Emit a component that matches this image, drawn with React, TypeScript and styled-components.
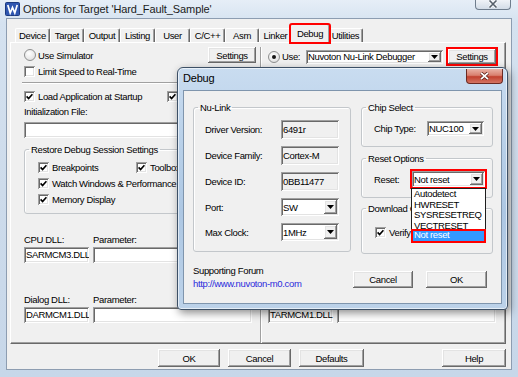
import React from 'react'
import styled, { createGlobalStyle, css } from 'styled-components'

//GLOBAL
const GlobalStyle = createGlobalStyle`
  html, body {
    margin: 0;
    padding: 0;
  }
  body {
    font-family: "Liberation Sans", Arial, sans-serif;
    font-size: 9.5px;
    letter-spacing: -0.35px;
    color: #000;
  }
  *, *::before, *::after {
    box-sizing: border-box;
  }
`

//SHARED LOOKS
const sunken = css`
  box-shadow: inset 1px 1px #a0a0a0, inset -1px -1px #ffffff, inset 2px 2px #696969, inset -2px -2px #e3e3e3;
`
const raised = css`
  box-shadow: inset -1px -1px #696969, inset 1px 1px #ffffff, inset -2px -2px #a0a0a0, inset 2px 2px #e3e3e3;
`
const redMark = css`
  outline: 2px solid #ff0000;
`

//DATA
const TABS = [
  { label: 'Device', w: 35 },
  { label: 'Target', w: 34 },
  { label: 'Output', w: 36 },
  { label: 'Listing', w: 35 },
  { label: 'User', w: 35 },
  { label: 'C/C++', w: 35 },
  { label: 'Asm', w: 34 },
  { label: 'Linker', w: 33 },
  { label: 'Debug', w: 36, active: true },
  { label: 'Utilities', w: 35 },
]

const NULINK_INFO = [
  { label: 'Driver Version:', value: '6491r' },
  { label: 'Device Family:', value: 'Cortex-M' },
  { label: 'Device ID:', value: '0BB11477' },
]

const RESET_CHOICES = ['Autodetect', 'HWRESET', 'SYSRESETREQ', 'VECTRESET', 'Not reset']

//WINDOW FRAME
const Desktop = styled.div`
  position: relative;
  width: 518px;
  height: 377px;
  overflow: hidden;
  background: #c4d5e9;
`
const MainWindow = styled.div`
  width: 100%;
  height: 100%;
  display: flex;
  flex-direction: column;
  background: linear-gradient(180deg, #e6eef7 0%, #d5e2f0 6%, #cddbeb 50%, #c7d7e9 100%);
`
const TitleBar = styled.div`
  position: relative;
  flex: none;
  height: 18px;
  display: flex;
  align-items: center;
  gap: 3px;
  padding-left: 5px;
  font-size: 11px;
  letter-spacing: -0.1px;
  color: #1b1b1b;
`
const WindowClose = styled.div`
  position: absolute;
  right: 7px;
  top: -2px;
  width: 36px;
  height: 12px;
  border: 1px solid #6f7d8d;
  border-top: none;
  border-radius: 0 0 4px 4px;
  background: linear-gradient(180deg, #f6f8fb, #d3dce7);
  display: flex;
  align-items: center;
  justify-content: center;
`
const Client = styled.div`
  flex: 1;
  margin: 0 6px 7px 6px;
  padding: 5px 5px 0 3px;
  background: #f0f0f0;
  border: 1px solid #8d9db1;
  display: flex;
  flex-direction: column;
`

//TABS
const TabStrip = styled.div`
  position: relative;
  z-index: 2;
  height: 19px;
  display: flex;
  align-items: flex-end;
  padding-left: 5px;
`
const Tab = styled.div<{ $w: number; $active?: boolean }>`
  position: relative;
  flex: none;
  width: ${p => p.$w + (p.$active ? 4 : 0)}px;
  height: ${p => (p.$active ? 19 : 14)}px;
  margin: ${p => (p.$active ? '0 -2px' : '0 0 1px 0')};
  padding-bottom: ${p => (p.$active ? 2 : 0)}px;
  display: flex;
  align-items: center;
  justify-content: center;
  background: #f0f0f0;
  border-top: 1px solid #ffffff;
  border-left: 1px solid #ffffff;
  border-right: 1px solid #696969;
  border-radius: 2px 2px 0 0;
  box-shadow: inset -1px 0 #a0a0a0;
  z-index: ${p => (p.$active ? 1 : 0)};
  ${p => p.$active && css`
    ${redMark};
    outline-offset: -1px;
  `}
`
const Panel = styled.div`
  position: relative;
  z-index: 1;
  margin-top: -1px;
  height: 302px;
  padding: 4px 0 0 11px;
  border-top: 1px solid #ffffff;
  border-left: 1px solid #ffffff;
  border-right: 1px solid #696969;
  border-bottom: 1px solid #696969;
  box-shadow: inset -1px -1px #a0a0a0;
  display: grid;
  grid-template-columns: 234px 2px 230px;
  column-gap: 4px;
  align-items: start;
`
const Divider = styled.div`
  align-self: stretch;
  border-left: 1px solid #a0a0a0;
  border-right: 1px solid #ffffff;
`
const Footer = styled.div`
  height: 18px;
  margin-top: 5px;
  padding-left: 148px;
  display: flex;
  align-items: center;
  gap: 8px;
`
const FooterSpacer = styled.div`
  flex: 1;
`

//CONTROLS
const Button = styled.div<{ $w: number; $h?: number; $marked?: boolean }>`
  flex: none;
  width: ${p => p.$w}px;
  height: ${p => p.$h ?? 18}px;
  display: flex;
  align-items: center;
  justify-content: center;
  background: #f0f0f0;
  ${raised};
  ${p => p.$marked && redMark};
`
const CheckLabel = styled.label<{ $span?: boolean }>`
  display: flex;
  align-items: center;
  gap: 3px;
  height: 14px;
  white-space: nowrap;
  ${p => p.$span && 'grid-column: 1 / -1;'}
`
const CheckBox = styled.span`
  flex: none;
  width: 11px;
  height: 11px;
  background: #ffffff;
  ${sunken};
  display: flex;
  align-items: center;
  justify-content: center;
`
const RadioLabel = styled.label<{ $w?: number }>`
  flex: none;
  display: flex;
  align-items: center;
  gap: 2px;
  width: ${p => (p.$w ? `${p.$w}px` : 'auto')};
  padding-left: 2px;
  white-space: nowrap;
`
const RadioDot = styled.span<{ $on?: boolean }>`
  position: relative;
  flex: none;
  width: 12px;
  height: 12px;
  border-radius: 50%;
  border: 1px solid #8e8f8f;
  background: radial-gradient(circle at 40% 35%, #ffffff, #d9d9d9);
  ${p => p.$on && css`
    &::after {
      content: '';
      position: absolute;
      left: 3px;
      top: 3px;
      width: 4px;
      height: 4px;
      border-radius: 50%;
      background: #161616;
    }
  `}
`
const TextField = styled.div<{ $readOnly?: boolean; $h?: number }>`
  flex: 1;
  min-width: 0;
  height: ${p => (p.$h ? `${p.$h}px` : '100%')};
  padding: 0 2px;
  display: flex;
  align-items: center;
  white-space: nowrap;
  overflow: hidden;
  background: ${p => (p.$readOnly ? '#f0f0f0' : '#ffffff')};
  ${sunken};
`
const SelectBox = styled.div<{ $w: number; $h: number; $marked?: boolean }>`
  position: relative;
  flex: none;
  width: ${p => p.$w}px;
  height: ${p => p.$h}px;
  padding: 2px;
  display: flex;
  align-items: center;
  background: #ffffff;
  ${sunken};
  ${p => p.$marked && redMark};
`
const SelectText = styled.span`
  flex: 1;
  overflow: hidden;
  white-space: nowrap;
`
const ArrowButton = styled.span`
  flex: none;
  width: 13px;
  align-self: stretch;
  display: flex;
  align-items: center;
  justify-content: center;
  background: #f0f0f0;
  ${raised};
`
const DropList = styled.div`
  position: absolute;
  z-index: 5;
  left: -1px;
  top: calc(100% + 1px);
  width: 75px;
  background: #ffffff;
  border: 1px solid #1e1e1e;
`
const DropItem = styled.div<{ $selected?: boolean }>`
  height: 10.5px;
  line-height: 10.5px;
  padding-left: 2px;
  white-space: nowrap;
  ${p => p.$selected && css`
    margin-top: -1px;
    height: 11.5px;
    background: #3399ff;
    color: #ffffff;
    ${redMark};
    outline-offset: -1px;
  `}
`

//GROUP BOX
const Group = styled.fieldset<{ $mt?: number; $mx?: number }>`
  min-width: 0;
  margin: ${p => p.$mt ?? 0}px ${p => p.$mx ?? 0}px 0;
  padding: 0;
  border: 1px solid #c3c7cb;
  border-radius: 3px;
  box-shadow: inset 1px 1px #ffffff;
`
const GroupTitle = styled.legend`
  margin-left: 4px;
  padding: 0 2px;
  line-height: 11px;
  font-size: inherit;
`

//TARGET PAGE
const Column = styled.div`
  display: flex;
  flex-direction: column;
`
const HeadRow = styled.div<{ $drop?: number }>`
  height: 16px;
  padding-top: ${p => p.$drop ?? 0}px;
  display: flex;
  align-items: center;
  justify-content: space-between;
  gap: 4px;
`
const OptionRow = styled.div<{ $mt: number; $split?: number }>`
  height: 14px;
  margin-top: ${p => p.$mt}px;
  padding-left: 2px;
  display: grid;
  grid-template-columns: ${p => (p.$split ? `${p.$split}px auto` : 'auto')};
  align-items: center;
`
const Separator = styled.div`
  height: 2px;
  margin-top: 4px;
  border-top: 1px solid #a0a0a0;
  border-bottom: 1px solid #ffffff;
`
const InitLabel = styled.div`
  height: 14px;
  margin-top: 2px;
  padding-left: 2px;
  line-height: 14px;
`
const FileRow = styled.div`
  height: 16px;
  margin-top: 3px;
  padding-left: 2px;
  display: flex;
`
const RestoreList = styled.div`
  padding: 5px 0 7px 13px;
  display: grid;
  grid-template-columns: 98px auto;
  grid-auto-rows: 14px;
  row-gap: 2px;
`
const DllGrid = styled.div<{ $mt: number }>`
  margin-top: ${p => p.$mt}px;
  padding-left: 2px;
  display: grid;
  grid-template-columns: 65px 159px;
  grid-template-rows: 12px 16px;
  column-gap: 4px;
  row-gap: 1px;
  align-items: center;
  line-height: 12px;
`

//DEBUG DIALOG
const Dialog = styled.div`
  position: absolute;
  z-index: 10;
  left: 177px;
  top: 67px;
  width: 331px;
  height: 243px;
  display: flex;
  flex-direction: column;
  border: 1px solid #3d5066;
  border-radius: 6px 6px 4px 4px;
  background: linear-gradient(180deg, #c9dcf0 0%, #b7cfe8 35%, #adc7e3 60%, #bcd2e9 100%);
  box-shadow: 2px 3px 9px rgba(0, 0, 0, 0.45), inset 0 0 0 1px rgba(255, 255, 255, 0.6);
`
const DialogTitleBar = styled.div`
  position: relative;
  flex: none;
  height: 22px;
  padding: 0 0 2px 5px;
  display: flex;
  align-items: center;
  font-size: 11px;
  letter-spacing: -0.2px;
  color: #000;
`
const DialogClose = styled.div`
  position: absolute;
  right: 4px;
  top: 1px;
  width: 37px;
  height: 15px;
  border: 1px solid #6b2a22;
  border-top: none;
  border-radius: 0 0 4px 4px;
  background: linear-gradient(180deg, #eab2a6 0%, #d9806f 45%, #c2412f 55%, #d47462 100%);
  display: flex;
  align-items: center;
  justify-content: center;
`
const DialogClient = styled.div`
  flex: 1;
  margin: 0 5px 5px 5px;
  background: #f0f0f0;
  border: 1px solid #7f95ad;
`
const DialogBody = styled.div`
  padding: 11px 9px 0;
  display: grid;
  grid-template-columns: 158px 132px;
  column-gap: 10px;
  align-items: start;
`
const Pane = styled.div`
  display: flex;
  flex-direction: column;
`
const InfoGrid = styled.div`
  padding: 7px 0 10px 11px;
  display: grid;
  grid-template-columns: 76px 58px;
  row-gap: 7px;
  align-items: center;
`
const Forum = styled.div`
  margin-top: 12px;
  line-height: 13px;
`
const ForumLink = styled.div`
  color: #2b2bdc;
`
const OptionLine = styled.div<{ $label: number; $pt: number; $pb: number }>`
  padding: ${p => p.$pt}px 0 ${p => p.$pb}px 12px;
  display: grid;
  grid-template-columns: ${p => p.$label}px auto;
  align-items: center;
`
const DownloadLine = styled.div`
  padding: 11px 0 14px 13px;
`
const DialogButtons = styled.div`
  margin: 17px 6px 0 -8px;
  display: flex;
  justify-content: space-between;
`

//SMALL DRAWINGS
const Tick = () => (
  <svg width="7" height="7" viewBox="0 0 7 7">
    <path d="M0.6 3.4 L2.6 5.6 L6.4 1.2" fill="none" stroke="#000" strokeWidth="1.6" />
  </svg>
)
const Arrow = () => (
  <svg width="7" height="4" viewBox="0 0 7 4">
    <path d="M0 0 H7 L3.5 4 Z" fill="#000" />
  </svg>
)
const AppIcon = () => (
  <svg width="15" height="14" viewBox="0 0 15 14">
    <rect x="0.5" y="0.5" width="14" height="13" rx="1" fill="#2f56b0" stroke="#1c3a80" />
    <path d="M2.8 3 L5.2 11 L7.5 5.5 L9.8 11 L12.2 3" fill="none" stroke="#ffffff" strokeWidth="1.7" />
  </svg>
)
const GrayCross = () => (
  <svg width="10" height="8" viewBox="0 0 10 8">
    <path d="M1.5 0.5 L8.5 7.5 M8.5 0.5 L1.5 7.5" stroke="#ffffff" strokeWidth="3" />
    <path d="M1.5 0.5 L8.5 7.5 M8.5 0.5 L1.5 7.5" stroke="#56606b" strokeWidth="1.6" />
  </svg>
)
const WhiteCross = () => (
  <svg width="11" height="8" viewBox="0 0 11 8">
    <path d="M2 0.8 L9 7.2 M9 0.8 L2 7.2" stroke="#5a1d15" strokeWidth="3.2" />
    <path d="M2 0.8 L9 7.2 M9 0.8 L2 7.2" stroke="#ffffff" strokeWidth="1.8" />
  </svg>
)

//SMALL COMPONENTS
function Check({ label, checked, span }: { label?: string; checked?: boolean; span?: boolean }) {
  return (
    <CheckLabel $span={span}>
      <CheckBox>{checked && <Tick />}</CheckBox>
      {label}
    </CheckLabel>
  )
}

function Select({ value, w, h, marked, children }: { value: string; w: number; h: number; marked?: boolean; children?: React.ReactNode }) {
  return (
    <SelectBox $w={w} $h={h} $marked={marked}>
      <SelectText>{value}</SelectText>
      <ArrowButton>
        <Arrow />
      </ArrowButton>
      {children}
    </SelectBox>
  )
}

//MAIN COMPONENT
export default function App() {
  return (
    <>
      <GlobalStyle />
      <Desktop>
        <MainWindow>
          <TitleBar>
            <AppIcon />
            Options for Target 'Hard_Fault_Sample'
            <WindowClose>
              <GrayCross />
            </WindowClose>
          </TitleBar>

          <Client>
            <TabStrip>
              {TABS.map(t => (
                <Tab key={t.label} $w={t.w} $active={t.active}>
                  {t.label}
                </Tab>
              ))}
            </TabStrip>

            <Panel>
              {/* SIMULATOR SIDE */}
              <Column>
                <HeadRow>
                  <RadioLabel>
                    <RadioDot />
                    Use Simulator
                  </RadioLabel>
                  <Button $w={48} $h={16}>Settings</Button>
                </HeadRow>
                <OptionRow $mt={1}>
                  <Check label="Limit Speed to Real-Time" />
                </OptionRow>
                <Separator />
                <OptionRow $mt={5} $split={143}>
                  <Check checked label="Load Application at Startup" />
                  <Check checked />
                </OptionRow>
                <InitLabel>Initialization File:</InitLabel>
                <FileRow>
                  <TextField />
                </FileRow>
                <Group $mt={6} $mx={2}>
                  <GroupTitle>Restore Debug Session Settings</GroupTitle>
                  <RestoreList>
                    <Check checked label="Breakpoints" />
                    <Check checked label="Toolbox" />
                    <Check checked span label="Watch Windows & Performance" />
                    <Check checked label="Memory Display" />
                  </RestoreList>
                </Group>
                <DllGrid $mt={20}>
                  <span>CPU DLL:</span>
                  <span>Parameter:</span>
                  <TextField>SARMCM3.DLL</TextField>
                  <TextField />
                </DllGrid>
                <DllGrid $mt={31}>
                  <span>Dialog DLL:</span>
                  <span>Parameter:</span>
                  <TextField>DARMCM1.DLL</TextField>
                  <TextField />
                </DllGrid>
              </Column>

              <Divider />

              {/* TARGET DEBUGGER SIDE (mostly under the dialog) */}
              <Column>
                <HeadRow $drop={3}>
                  <RadioLabel $w={35}>
                    <RadioDot $on />
                    Use:
                  </RadioLabel>
                  <Select value="Nuvoton Nu-Link Debugger" w={137} h={14} />
                  <Button $w={48} $h={15} $marked>Settings</Button>
                </HeadRow>
                <DllGrid $mt={231}>
                  <span>Dialog DLL:</span>
                  <span>Parameter:</span>
                  <TextField>TARMCM1.DLL</TextField>
                  <TextField />
                </DllGrid>
              </Column>
            </Panel>

            <Footer>
              <Button $w={62}>OK</Button>
              <Button $w={63}>Cancel</Button>
              <Button $w={65}>Defaults</Button>
              <FooterSpacer />
              <Button $w={64}>Help</Button>
            </Footer>
          </Client>
        </MainWindow>

        {/* DEBUG SETTINGS DIALOG */}
        <Dialog>
          <DialogTitleBar>
            Debug
            <DialogClose>
              <WhiteCross />
            </DialogClose>
          </DialogTitleBar>
          <DialogClient>
            <DialogBody>
              <Pane>
                <Group>
                  <GroupTitle>Nu-Link</GroupTitle>
                  <InfoGrid>
                    {NULINK_INFO.map(row => (
                      <React.Fragment key={row.label}>
                        <span>{row.label}</span>
                        <TextField $readOnly $h={19}>{row.value}</TextField>
                      </React.Fragment>
                    ))}
                    <span>Port:</span>
                    <Select value="SW" w={58} h={18} />
                    <span>Max Clock:</span>
                    <Select value="1MHz" w={58} h={18} />
                  </InfoGrid>
                </Group>
                <Forum>
                  <div>Supporting Forum</div>
                  <ForumLink>http://www.nuvoton-m0.com</ForumLink>
                </Forum>
              </Pane>

              <Pane>
                <Group>
                  <GroupTitle>Chip Select</GroupTitle>
                  <OptionLine $label={53} $pt={8} $pb={10}>
                    <span>Chip Type:</span>
                    <Select value="NUC100" w={57} h={15} />
                  </OptionLine>
                </Group>
                <Group $mt={6}>
                  <GroupTitle>Reset Options</GroupTitle>
                  <OptionLine $label={38} $pt={7} $pb={10}>
                    <span>Reset:</span>
                    <Select value="Not reset" w={73} h={16} marked>
                      <DropList>
                        {RESET_CHOICES.map(c => (
                          <DropItem key={c} $selected={c === 'Not reset'}>
                            {c}
                          </DropItem>
                        ))}
                      </DropList>
                    </Select>
                  </OptionLine>
                </Group>
                <Group $mt={5}>
                  <GroupTitle>Download Options</GroupTitle>
                  <DownloadLine>
                    <Check checked label="Verify Code Download" />
                  </DownloadLine>
                </Group>
                <DialogButtons>
                  <Button $w={60} $h={17}>Cancel</Button>
                  <Button $w={61} $h={17}>OK</Button>
                </DialogButtons>
              </Pane>
            </DialogBody>
          </DialogClient>
        </Dialog>
      </Desktop>
    </>
  )
}
